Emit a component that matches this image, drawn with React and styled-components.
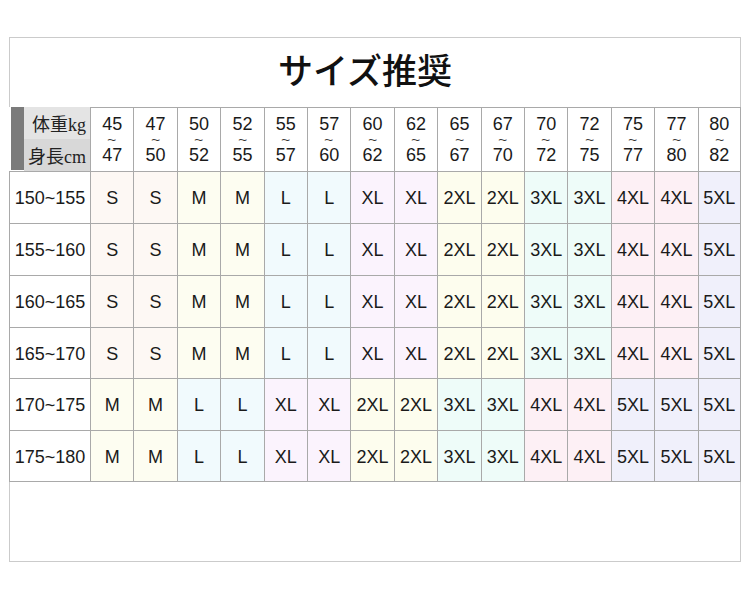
import React from 'react';
import styled, { createGlobalStyle } from 'styled-components';

const Global = createGlobalStyle`
  html, body { margin: 0; padding: 0; background: #fff; }
  body { font-family: "Liberation Sans", "Noto Sans CJK JP", sans-serif; color: #1a1a1a; }
`;

const SIZE_BG = {
  S: '#fdf8f4',
  M: '#fdfdf1',
  L: '#f1fafd',
  XL: '#fbf3fd',
  '2XL': '#fdfdee',
  '3XL': '#eefcf9',
  '4XL': '#fdf0f5',
  '5XL': '#f0f0fb',
};

const WEIGHTS = [
  [45, 47], [47, 50], [50, 52], [52, 55], [55, 57], [57, 60], [60, 62], [62, 65],
  [65, 67], [67, 70], [70, 72], [72, 75], [75, 77], [77, 80], [80, 82],
];

const SMALL = ['S', 'S', 'M', 'M', 'L', 'L', 'XL', 'XL', '2XL', '2XL', '3XL', '3XL', '4XL', '4XL', '5XL'];
const LARGE = ['M', 'M', 'L', 'L', 'XL', 'XL', '2XL', '2XL', '3XL', '3XL', '4XL', '4XL', '5XL', '5XL', '5XL'];

const ROWS = [
  { h: '150~155', sizes: SMALL },
  { h: '155~160', sizes: SMALL },
  { h: '160~165', sizes: SMALL },
  { h: '165~170', sizes: SMALL },
  { h: '170~175', sizes: LARGE },
  { h: '175~180', sizes: LARGE },
];

const Page = styled.div`
  width: 750px;
  height: 603px;
  padding: 37px 0 0 9px;
  box-sizing: border-box;
`;

const Frame = styled.div`
  width: 732px;
  height: 525px;
  box-sizing: border-box;
  border: 1px solid #cbcbcb;
  display: flex;
  flex-direction: column;
`;

const Title = styled.h1`
  margin: 0;
  height: 69px;
  display: flex;
  align-items: center;
  justify-content: center;
  padding: 0 20px 8px 0;
  box-sizing: border-box;
  font-family: "Noto Sans CJK JP", sans-serif;
  font-weight: 500;
  font-size: 35px;
  color: #111;
`;

const Table = styled.div`
  margin: 0 -1px;
  display: grid;
  grid-template-columns: 81px repeat(15, 1fr);
  grid-template-rows: 64px 52px 52px 52px 51px 52px 52px;
`;

const Cell = styled.div`
  box-sizing: border-box;
  border-left: 1px solid #a9a9a9;
  border-top: 1px solid #a9a9a9;
  border-right: ${p => (p.$last ? '1px solid #a9a9a9' : 'none')};
  border-bottom: ${p => (p.$bottom ? '1px solid #a9a9a9' : 'none')};
  background: ${p => p.$bg || '#fff'};
  display: flex;
  align-items: center;
  justify-content: center;
  font-size: 18px;
  padding-top: ${p => (p.$head ? '0' : '2px')};
`;

const LabelHead = styled.div`
  display: flex;
  padding-left: 2px;
  background: #fff;
`;

const DarkBar = styled.div`
  width: 13px;
  height: 63px;
  background: #7b7b7b;
`;

const LabelBox = styled.div`
  flex: 1;
  display: flex;
  flex-direction: column;
  font-family: "Liberation Serif", "Noto Sans CJK JP", serif;
  font-size: 18px;
  color: #222;
`;

const LabelHalf = styled.div`
  flex: 1;
  display: flex;
  align-items: center;
  justify-content: ${p => (p.$right ? 'flex-end' : 'flex-start')};
  padding: 0 4px;
  background: ${p => p.$bg};
`;

const Range = styled.div`
  display: flex;
  flex-direction: column;
  align-items: center;
`;

const Num = styled.span`
  display: block;
  font-size: 18px;
  line-height: 20px;
  height: 20px;
`;

const Tilde = styled.span`
  display: block;
  font-size: 9.5px;
  line-height: 11px;
  height: 11px;
  color: #333;
  font-weight: 700;
  transform: scaleX(1.6);
`;

export default function App() {
  return (
    <>
      <Global />
      <Page>
        <Frame>
          <Title>サイズ推奨</Title>
          <Table>
            <LabelHead>
              <DarkBar />
              <LabelBox>
                <LabelHalf $right $bg="#e4e4e4">体重kg</LabelHalf>
                <LabelHalf $bg="#d8d8d8">身長cm</LabelHalf>
              </LabelBox>
            </LabelHead>
            {WEIGHTS.map(([a, b], i) => (
              <Cell key={'w' + i} $head $last={i === WEIGHTS.length - 1}>
                <Range>
                  <Num>{a}</Num>
                  <Tilde>~</Tilde>
                  <Num>{b}</Num>
                </Range>
              </Cell>
            ))}
            {ROWS.map((row, r) => {
              const bottom = r === ROWS.length - 1;
              return (
                <React.Fragment key={row.h}>
                  <Cell $bottom={bottom}>{row.h}</Cell>
                  {row.sizes.map((s, i) => (
                    <Cell
                      key={i}
                      $bg={SIZE_BG[s]}
                      $bottom={bottom}
                      $last={i === row.sizes.length - 1}
                    >
                      {s}
                    </Cell>
                  ))}
                </React.Fragment>
              );
            })}
          </Table>
        </Frame>
      </Page>
    </>
  );
}
